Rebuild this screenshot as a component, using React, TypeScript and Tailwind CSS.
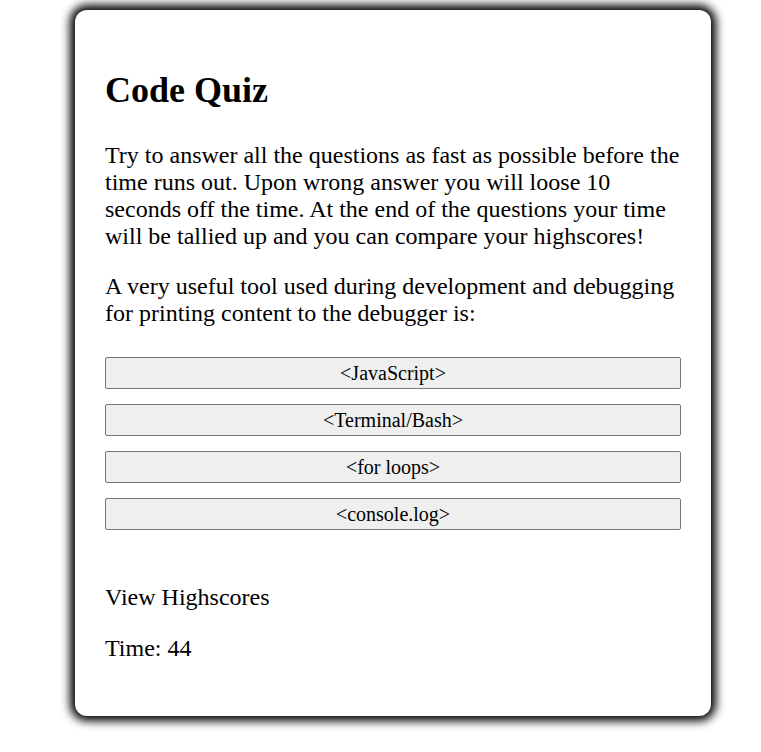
export default function App() {
  const answers = ["<JavaScript>", "<Terminal/Bash>", "<for loops>", "<console.log>"];
  return (
    <div className="min-h-[752px] bg-white pt-[10px] pl-[75px]" style={{ fontFamily: '"Liberation Serif", "Times New Roman", serif' }}>
      <div className="w-[636px] h-[706px] bg-white rounded-[12px] shadow-[0_0_10px_5px_rgba(0,0,0,1)] px-[30px] pt-[30px] text-black">
        <h1 className="text-[36px] font-bold leading-[41px] mt-[30px] mb-[31px]">Code Quiz</h1>
        <p className="text-[24px] leading-[27px] mb-[23px]">
          Try to answer all the questions as fast as possible before the time runs out. Upon wrong answer you will loose 10 seconds off the time. At the end of the questions your time will be tallied up and you can compare your highscores!
        </p>
        <p className="text-[24px] leading-[27px] mb-[30px]">
          A very useful tool used during development and debugging for printing content to the debugger is:
        </p>
        <div className="flex flex-col gap-[15px]">
          {answers.map((a) => (
            <button
              key={a}
              className="w-full h-[32px] bg-[#efefef] border border-[#767676] rounded-[2px] text-[20px] leading-[30px] text-black text-center"
              style={{ fontFamily: '"Liberation Serif", serif' }}
            >
              {a}
            </button>
          ))}
        </div>
        <p className="text-[24px] leading-[27px] mt-[54px]">View Highscores</p>
        <p className="text-[24px] leading-[27px] mt-[24px]">Time: 44</p>
      </div>
    </div>
  );
}
